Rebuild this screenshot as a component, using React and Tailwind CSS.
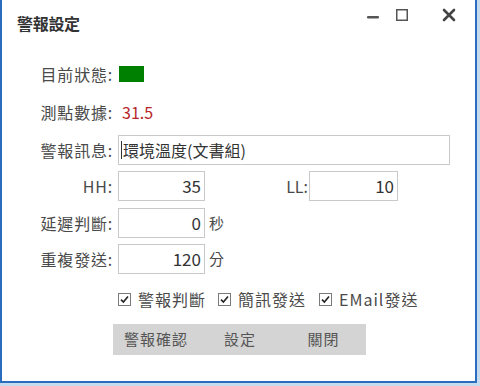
import React from 'react';

const font = { fontFamily: '"Noto Sans CJK TC", "Noto Sans", sans-serif' };

// 勾選框
const Check = ({ label }) => (
  <label className="flex items-center">
    <span className="w-[13px] h-[13px] border border-[#7a7a7a] bg-white flex items-center justify-center">
      <svg width="9" height="9" viewBox="0 0 9 9">
        <path d="M1 4.6 L3.4 7 L8 1.6" fill="none" stroke="#222" strokeWidth="1.6" />
      </svg>
    </span>
    <span className="ml-[7px] text-[16px] text-[#4a4a4a] leading-none tracking-[1px]">{label}</span>
  </label>
);

const Label = ({ children }) => (
  <div className="w-[116px] pr-[5px] text-right text-[16px] text-[#4a4a4a] leading-none tracking-[0.8px]">{children}</div>
);

const NumBox = ({ value, w = 'w-[87px]' }) => (
  <div className={`${w} h-[30px] border border-[#c9c9c9] bg-white flex items-center justify-end pr-[3px] text-[17px] text-[#333]`}>
    {value}
  </div>
);

export default function App() {
  return (
    <div className="w-[480px] h-[386px] bg-[#c7dbef] overflow-hidden" style={font}>
      <div className="w-[477px] h-[383px] bg-white border-l-2 border-r-2 border-b-2 border-[#2a6dbe] flex flex-col">
        {/* 標題列 */}
        <div className="h-[46px] flex items-center pl-[15px]">
          <span className="text-[16px] font-bold text-[#333] tracking-[-0.3px]">警報設定</span>
          <div className="ml-auto self-start flex items-start pr-[19px]">
            <svg width="12" height="3" className="mt-[16px]" viewBox="0 0 12 3">
              <rect x="0" y="0" width="12" height="2.5" rx="1" fill="#555" />
            </svg>
            <svg width="12" height="12" className="ml-[17px] mt-[9px]" viewBox="0 0 12 12">
              <rect x="0.75" y="0.75" width="10.5" height="10.5" fill="none" stroke="#555" strokeWidth="1.5" />
            </svg>
            <svg width="14" height="14" className="ml-[34px] mt-[8px]" viewBox="0 0 14 14">
              <path d="M2 2 L12 12 M12 2 L2 12" stroke="#444" strokeWidth="2.6" strokeLinecap="round" />
            </svg>
          </div>
        </div>

        {/* 目前狀態 */}
        <div className="mt-[13px] h-[30px] flex items-center">
          <Label>目前狀態:</Label>
          <span className="ml-[1px] w-[25px] h-[16px] bg-[#008000]" />
        </div>

        {/* 測點數據 */}
        <div className="mt-[8px] h-[30px] flex items-center">
          <Label>測點數據:</Label>
          <span className="ml-[4px] text-[16px] text-[#b5262b] leading-none">31.5</span>
        </div>

        {/* 警報訊息 */}
        <div className="mt-[8px] h-[30px] flex items-center">
          <Label>警報訊息:</Label>
          <div className="w-[332px] h-[30px] border border-[#c9c9c9] flex items-center pl-[2px] text-[16px] text-[#333]">
            <span className="w-px h-[18px] bg-[#333] mr-[1px]" />
            環境溫度(文書組)
          </div>
        </div>

        {/* HH / LL */}
        <div className="mt-[6px] h-[30px] flex items-center">
          <Label>HH:</Label>
          <NumBox value="35" />
          <div className="w-[104px] pr-[1px] text-right text-[16px] text-[#4a4a4a]">LL:</div>
          <NumBox value="10" w="w-[89px]" />
        </div>

        {/* 延遲判斷 */}
        <div className="mt-[7px] h-[30px] flex items-center">
          <Label>延遲判斷:</Label>
          <NumBox value="0" />
          <span className="ml-[4px] text-[15px] text-[#4a4a4a]">秒</span>
        </div>

        {/* 重複發送 */}
        <div className="mt-[6px] h-[30px] flex items-center">
          <Label>重複發送:</Label>
          <NumBox value="120" />
          <span className="ml-[4px] text-[15px] text-[#4a4a4a]">分</span>
        </div>

        {/* 勾選項目 */}
        <div className="mt-[15px] h-[20px] flex items-center pl-[116px]">
          <Check label="警報判斷" />
          <div className="ml-[12px]"><Check label="簡訊發送" /></div>
          <div className="ml-[13px]"><Check label="EMail發送" /></div>
        </div>

        {/* 按鈕列 */}
        <div className="mt-[15px] ml-[111px] w-[253px] h-[31px] bg-[#d4d4d4] flex">
          <button className="w-[86px] text-[15px] text-[#555] tracking-[1px]">警報確認</button>
          <button className="w-[82px] text-[15px] text-[#555] tracking-[1px]">設定</button>
          <button className="w-[85px] text-[15px] text-[#555] tracking-[1px]">關閉</button>
        </div>
      </div>
    </div>
  );
}
